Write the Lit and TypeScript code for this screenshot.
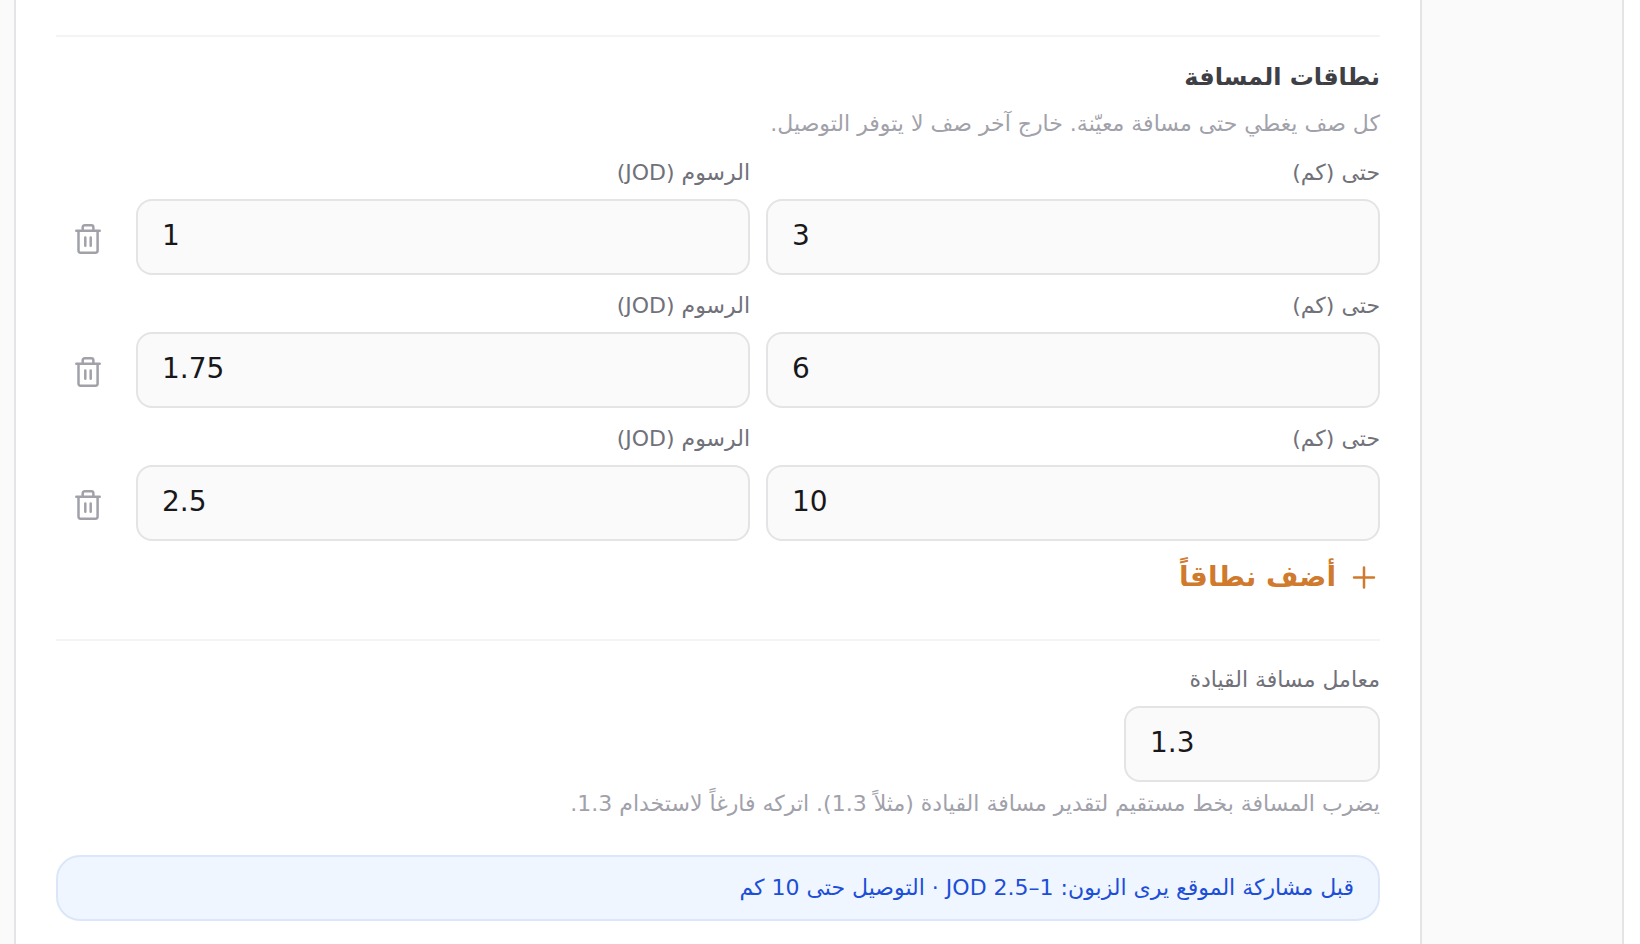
import { LitElement, html, css, svg } from "lit";
import { customElement, state } from "lit/decorators.js";

interface Band {
  id: number;
  upTo: string;
  fee: string;
}

const trashIcon = html`<svg class="trash" viewBox="0 0 32 36" aria-hidden="true">
  ${svg`<path d="M4.3 9.8H27.7M10.7 9.6V6.4Q10.7 4.3 12.8 4.3H19.3Q21.4 4.3 21.4 6.4V9.6M6.5 9.8V29.6Q6.5 31.7 8.6 31.7H23.5Q25.6 31.7 25.6 29.6V9.8M13.3 16.5V24.7M18.7 16.5V24.7"/>`}
</svg>`;

const plusIcon = html`<svg class="plus" viewBox="0 0 32 32" aria-hidden="true">
  ${svg`<path d="M16 6.5V26.5M6 16.5H26"/>`}
</svg>`;

@customElement("app-root")
export class AppRoot extends LitElement {
  static styles = css`
    :host {
      display: block;
      direction: rtl;
      font-family: "DejaVu Sans", sans-serif;
      font-size: 22px;
      line-height: 33px;
      color: #71717a;
    }
    *,
    *::before,
    *::after {
      box-sizing: border-box;
    }
    .page {
      display: flex;
      min-height: 100vh;
      background: #fafafa;
      padding-left: 14px;
    }
    .edge {
      flex: none;
      width: 18px;
      background: #fff;
      border-left: 2px solid #e4e4e7;
    }
    .gutter {
      flex: none;
      width: 200px;
    }
    .card {
      flex: 1;
      min-width: 0;
      background: #fff;
      border: solid #e4e4e7;
      border-width: 0 2px;
      padding: 35px 40px 0;
    }
    .section {
      border-top: 2px solid #f4f4f5;
      padding-top: 22px;
    }
    .section + .section {
      margin-top: 42px;
    }
    .title {
      margin: 0;
      font-size: 24px;
      line-height: 36px;
      font-weight: 700;
      color: #3f3f46;
    }
    .hint {
      margin: 0;
      color: #a1a1aa;
    }
    .title + .hint {
      margin-top: 12px;
    }
    .field + .hint {
      margin-top: 5px;
    }
    .bands {
      display: grid;
      gap: 14px;
      margin-top: 16px;
    }
    .band {
      display: flex;
      align-items: flex-end;
      gap: 16px;
    }
    .field {
      display: flex;
      flex-direction: column;
      gap: 10px;
      flex: 1;
      min-width: 0;
    }
    .narrow {
      width: 256px;
    }
    .input {
      width: 100%;
      height: 76px;
      padding: 0 24px 4px;
      border: 2px solid #e4e4e7;
      border-radius: 16px;
      background: #fafafa;
      color: #18181b;
      font: inherit;
      font-size: 28px;
      direction: ltr;
      text-align: left;
    }
    .remove {
      display: grid;
      place-items: center;
      flex: none;
      width: 64px;
      height: 72px;
      padding: 0;
      border: 0;
      background: none;
      color: #a1a1aa;
    }
    .trash {
      width: 32px;
      height: 36px;
    }
    .plus {
      width: 32px;
      height: 32px;
    }
    .trash,
    .plus {
      fill: none;
      stroke: currentColor;
      stroke-width: 2.5;
      stroke-linecap: round;
      stroke-linejoin: round;
    }
    .add {
      display: flex;
      align-items: center;
      gap: 12px;
      margin-top: 16px;
      padding: 0;
      border: 0;
      background: none;
      color: #d07a2d;
      font: inherit;
      font-size: 28px;
      line-height: 40px;
      font-weight: 700;
    }
    .notice {
      margin: 35px 0 0;
      padding: 14px 24px;
      border: 2px solid #dbe7f8;
      border-radius: 24px;
      background: #eff6ff;
      line-height: 34px;
      color: #1d4ed8;
    }
  `;

  @state() private bands: Band[] = [
    { id: 1, upTo: "3", fee: "1" },
    { id: 2, upTo: "6", fee: "1.75" },
    { id: 3, upTo: "10", fee: "2.5" },
  ];

  private nextId = 4;

  private addBand() {
    this.bands = [...this.bands, { id: this.nextId++, upTo: "", fee: "" }];
  }

  private removeBand(id: number) {
    this.bands = this.bands.filter((band) => band.id !== id);
  }

  private renderBand(band: Band) {
    return html`<div class="band">
      <div class="field">
        <label for="up-to-${band.id}">حتى (كم)</label>
        <input class="input" id="up-to-${band.id}" inputmode="decimal" .value=${band.upTo} />
      </div>
      <div class="field">
        <label for="fee-${band.id}">الرسوم (JOD)</label>
        <input class="input" id="fee-${band.id}" inputmode="decimal" .value=${band.fee} />
      </div>
      <button class="remove" type="button" aria-label="حذف" @click=${() => this.removeBand(band.id)}>
        ${trashIcon}
      </button>
    </div>`;
  }

  render() {
    return html`<div class="page">
      <div class="edge"></div>
      <div class="gutter"></div>
      <main class="card">
        <section class="section">
          <h2 class="title">نطاقات المسافة</h2>
          <p class="hint">كل صف يغطي حتى مسافة معيّنة. خارج آخر صف لا يتوفر التوصيل.</p>
          <div class="bands">${this.bands.map((band) => this.renderBand(band))}</div>
          <button class="add" type="button" @click=${this.addBand}>${plusIcon}<span>أضف نطاقاً</span></button>
        </section>
        <section class="section">
          <div class="field narrow">
            <label for="factor">معامل مسافة القيادة</label>
            <input class="input" id="factor" inputmode="decimal" value="1.3" />
          </div>
          <p class="hint">يضرب المسافة بخط مستقيم لتقدير مسافة القيادة (مثلاً 1.3). اتركه فارغاً لاستخدام 1.3.</p>
        </section>
        <p class="notice">قبل مشاركة الموقع يرى الزبون: 1–2.5 JOD · التوصيل حتى 10 كم</p>
      </main>
    </div>`;
  }
}
